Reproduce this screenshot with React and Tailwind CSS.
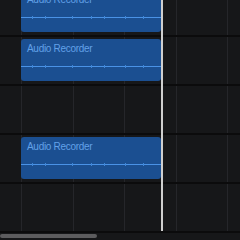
const rows = [
  { clip: true },
  { clip: true },
  { clip: false },
  { clip: true },
  { clip: false },
]

const ticks = [11, 24, 51, 70, 83, 104, 122]

// thin waveform: flat line with a few tiny spikes
const Wave = () => (
  <svg width="140" height="5" viewBox="0 0 140 5" className="block">
    <rect x="0" y="2" width="140" height="1" fill="#4a92e6" />
    {ticks.map((x) => (
      <rect key={x} x={x} y="1" width="1" height="3" fill="#3f86d6" />
    ))}
  </svg>
)

const Clip = () => (
  <div className="flex h-[42px] w-[140px] flex-col gap-[9px] rounded-[3px] bg-[#1b4f91] pt-[4px]">
    <div className="pl-[6px] text-[10px] leading-[12px] tracking-[-0.3px] text-[#62a1e8] font-['Liberation_Sans',Arial,sans-serif]">
      Audio Recorder
    </div>
    <Wave />
  </div>
)

export default function App() {
  return (
    <div className="relative w-[240px] h-[240px] overflow-hidden bg-[#161719]">
      {/* beat grid behind the tracks */}
      <div className="absolute inset-0 flex pl-[21px]">
        {[0, 1, 2, 3, 4].map((i) => (
          <div key={i} className="w-[51.5px] h-[231px] border-l border-[#25262a] shrink-0" />
        ))}
      </div>

      <div className="relative -mt-[14px] flex flex-col">
        {rows.map((r, i) => (
          <div key={i} className="h-[49px] border-t-2 border-[#0b0b0c] pl-[21px] pt-[2px]">
            {r.clip && <Clip />}
          </div>
        ))}
        <div className="border-t-2 border-[#0b0b0c] pt-[1px]">
          <div className="h-[4px] w-[97px] rounded-full bg-[#5c5c5e]" />
        </div>
      </div>

      {/* playhead */}
      <div className="absolute left-[161px] top-0 h-[231px] w-[1.5px] bg-[#cfcfcf]" />
    </div>
  )
}
